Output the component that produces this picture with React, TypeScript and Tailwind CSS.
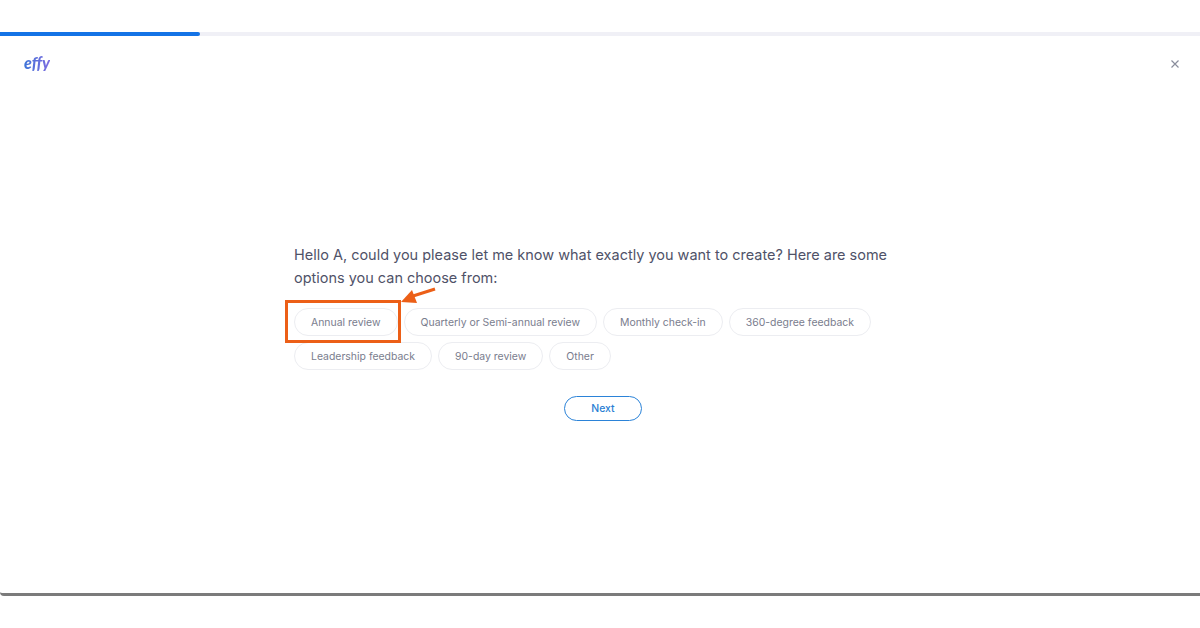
import React from "react";

const row1 = ["Annual review", "Quarterly or Semi-annual review", "Monthly check-in", "360-degree feedback"];
const row2 = ["Leadership feedback", "90-day review", "Other"];

function Chip({ label }: { label: string }) {
  return (
    <div className="h-[28px] flex items-center px-4 pt-px rounded-full border border-[#ecedf1] text-[10.45px] text-[#7a7d8e] whitespace-nowrap bg-white">
      {label}
    </div>
  );
}

export default function App() {
  return (
    <div className="w-[1200px] h-[628px] bg-white overflow-hidden font-['Inter',sans-serif] pt-8">
      <div className="h-[564px] border-b-[3px] border-[#7b7b7b] rounded-bl-[4px] flex flex-col">
        <div className="h-1 bg-[#f0f0f6] shrink-0">
          <div className="h-1 w-[200px] bg-[#1473e6] rounded-r-full" />
        </div>
        <div className="flex items-center justify-between pl-6 pr-5 pt-[14px] h-[40px] shrink-0">
          <span className="font-['Lato',sans-serif] italic font-black text-[16px] leading-none bg-gradient-to-r from-[#3b74d8] to-[#7b6be0] bg-clip-text text-transparent">
            effy
          </span>
          <svg width="10" height="10" viewBox="0 0 10 10" fill="none" stroke="#8a8d9c" strokeWidth="1.2" className="mt-px">
            <path d="M1.5 1.5l7 7M8.5 1.5l-7 7" />
          </svg>
        </div>
        <div className="pl-[294px] pt-[167px]">
          <p className="w-[610px] text-[14.48px] leading-[23px] text-[#4f5268]">
            Hello A, could you please let me know what exactly you want to create? Here are some options you can choose from:
          </p>
          <div className="relative mt-[19px] flex flex-col gap-[6px]">
            <div className="flex gap-[6px]">
              {row1.map((l) => (
                <Chip key={l} label={l} />
              ))}
            </div>
            <div className="flex gap-[6px]">
              {row2.map((l) => (
                <Chip key={l} label={l} />
              ))}
            </div>
            <div className="absolute left-[-9px] top-[-8px] w-[116px] h-[43px] border-[3px] border-[#ec5f17]" />
            <svg className="absolute left-[105px] top-[-23px]" width="38" height="20" viewBox="0 0 38 20">
              <path d="M36 4L14 11" stroke="#ec5f17" strokeWidth="3" fill="none" />
              <path d="M2 17L13 5L18 18z" fill="#ec5f17" />
            </svg>
          </div>
          <div className="w-[618px] flex justify-center mt-[26px]">
            <div className="w-[78px] h-[25px] flex items-center justify-center rounded-full border border-[#2b83d8] text-[10.45px] font-medium text-[#2a7fd4]">
              Next
            </div>
          </div>
        </div>
      </div>
    </div>
  );
}
